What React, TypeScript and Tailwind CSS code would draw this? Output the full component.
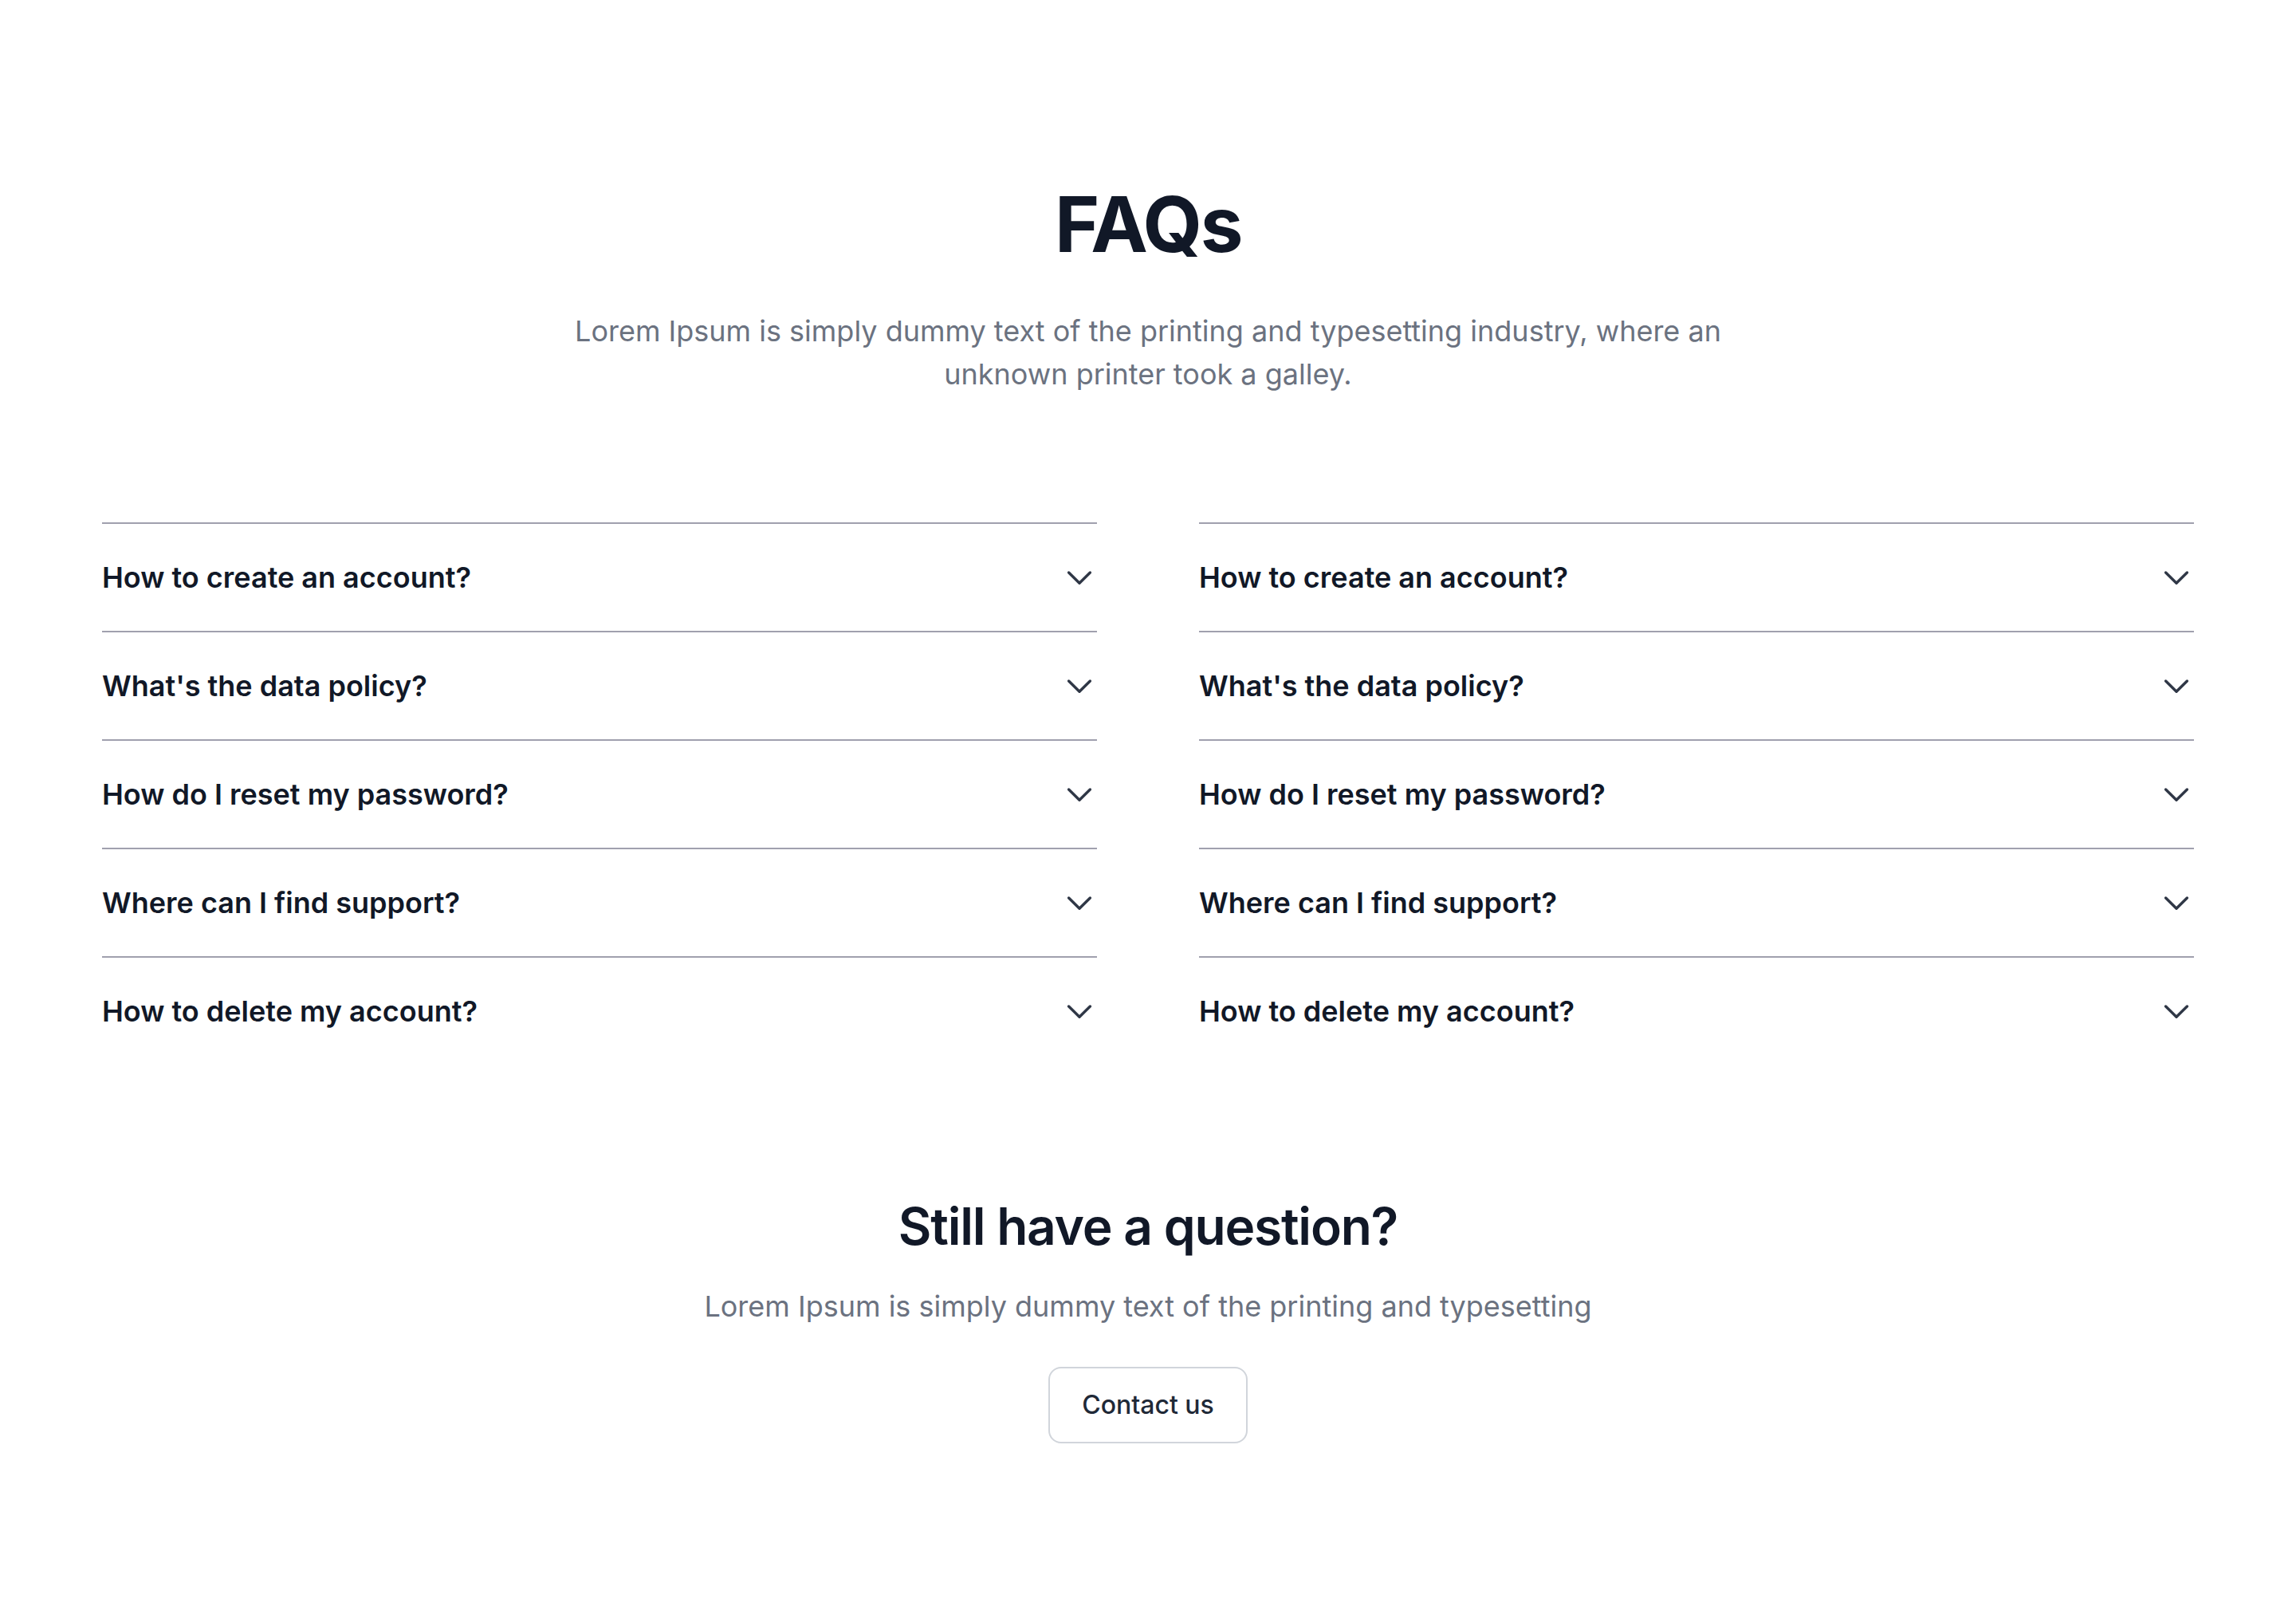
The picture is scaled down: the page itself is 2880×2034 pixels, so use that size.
import React from "react";

const questions = [
  "How to create an account?",
  "What's the data policy?",
  "How do I reset my password?",
  "Where can I find support?",
  "How to delete my account?",
];

function Chevron() {
  return (
    <svg
      width="48"
      height="48"
      viewBox="0 0 24 24"
      fill="none"
      stroke="#2f3746"
      strokeWidth="1.7"
      strokeLinecap="round"
      strokeLinejoin="round"
      className="shrink-0"
    >
      <path d="m6.3 9 6.7 6.6 6.7-6.6" />
    </svg>
  );
}

function Column() {
  return (
    <div className="flex flex-col">
      {questions.map((q) => (
        <div
          key={q}
          className="flex h-[136px] items-center justify-between border-t-2 border-[#a0a0ae]"
        >
          <span className="text-[36px] font-semibold text-[#111827]">{q}</span>
          <Chevron />
        </div>
      ))}
    </div>
  );
}

export default function App() {
  return (
    <div
      className="min-h-[2034px] bg-white px-[128px] pt-[233px]"
      style={{ fontFamily: "Inter, 'Noto Sans', sans-serif" }}
    >
      <h1 className="text-center text-[96px] font-bold leading-[96px] tracking-tight text-[#111827]">
        FAQs
      </h1>
      <p className="mx-auto mt-[59px] max-w-[1536px] text-center text-[36px] leading-[54px] text-[#6b7280]">
        Lorem Ipsum is simply dummy text of the printing and typesetting
        industry, where an unknown printer took a galley.
      </p>
      <div className="mt-[159px] grid grid-cols-2 gap-x-[128px]">
        <Column />
        <Column />
      </div>
      <div className="mt-[163px] flex flex-col items-center">
        <h2 className="text-center text-[64px] font-semibold leading-[80px] tracking-[-0.019em] text-[#111827]">
          Still have a question?
        </h2>
        <p className="mt-[32px] text-center text-[36px] leading-[56px] text-[#6b7280]">
          Lorem Ipsum is simply dummy text of the printing and typesetting
        </p>
        <button className="mt-[48px] h-[96px] rounded-2xl border-2 border-[#d1d5db] bg-white px-[40px] text-[32px] font-medium text-[#1f2937]">
          Contact us
        </button>
      </div>
    </div>
  );
}
